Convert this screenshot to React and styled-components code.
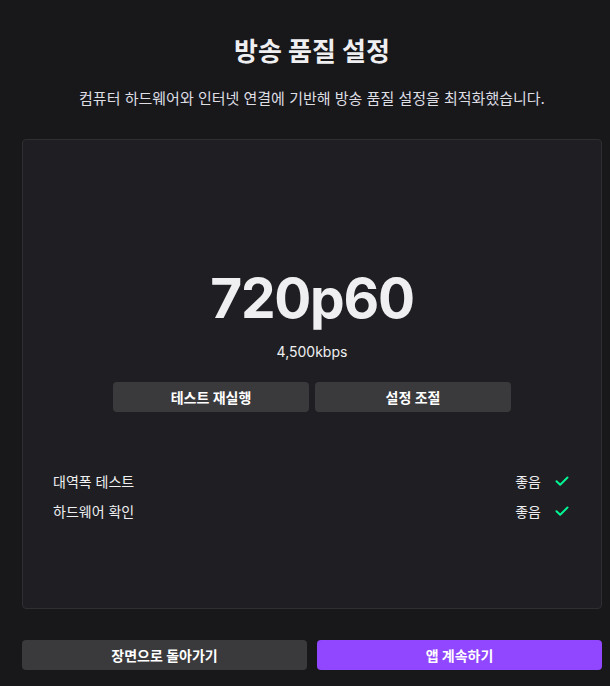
import styled, { createGlobalStyle } from 'styled-components'

const Global = createGlobalStyle`
  html, body {
    margin: 0;
    padding: 0;
    background: #18181b;
  }
  body {
    font-family: Inter, "Noto Sans CJK KR", sans-serif;
    color: #efeff1;
  }
`

const Page = styled.div`
  width: 610px;
  height: 686px;
  box-sizing: border-box;
  padding: 0 8px 0 22px;
  display: flex;
  flex-direction: column;
`

const Title = styled.h1`
  margin: 36px 0 0;
  font-size: 26px;
  line-height: 32px;
  font-weight: 700;
  text-align: center;
`

const Subtitle = styled.p`
  margin: 21px 0 0;
  font-size: 15px;
  line-height: 20px;
  text-align: center;
  color: #dedee3;
`

const Card = styled.section`
  margin-top: 30px;
  height: 470px;
  box-sizing: border-box;
  background: #1f1f23;
  border: 1px solid #2e2e33;
  border-radius: 4px;
  display: flex;
  flex-direction: column;
  align-items: center;
  padding-top: 125px;
`

const Resolution = styled.div`
  font-size: 55px;
  line-height: 66px;
  font-weight: 700;
  letter-spacing: -1.3px;
  color: #efeff1;
`

const Bitrate = styled.div`
  margin-top: 11px;
  font-size: 14px;
  line-height: 20px;
`

const ButtonRow = styled.div`
  margin-top: 20px;
  display: flex;
  gap: 6px;
`

const Button = styled.button`
  width: ${p => p.$w || 196}px;
  height: 30px;
  border: none;
  border-radius: 4px;
  background: ${p => (p.$primary ? '#9147ff' : '#3a3a3d')};
  color: #fff;
  font-family: inherit;
  font-size: 14px;
  font-weight: 700;
  cursor: pointer;
`

const Checks = styled.div`
  align-self: stretch;
  margin-top: 54px;
  padding: 0 31px 0 30px;
  display: flex;
  flex-direction: column;
`

const CheckRow = styled.div`
  height: 30px;
  display: flex;
  align-items: center;
  justify-content: space-between;
  font-size: 14px;
`

const Status = styled.span`
  display: flex;
  align-items: center;
  gap: 13px;
`

const Footer = styled.div`
  margin-top: 31px;
  display: grid;
  grid-template-columns: 285px 285px;
  gap: 10px;
`

const Check = () => (
  <svg width="16" height="16" viewBox="0 0 16 16" fill="none">
    <path d="M2.5 8.2 L6.2 11.8 L13.5 4.5" stroke="#00f593" strokeWidth="2" strokeLinecap="round" strokeLinejoin="round" />
  </svg>
)

const rows = ['대역폭 테스트', '하드웨어 확인']

export default function App() {
  return (
    <>
      <Global />
      <Page>
        <Title>방송 품질 설정</Title>
        <Subtitle>컴퓨터 하드웨어와 인터넷 연결에 기반해 방송 품질 설정을 최적화했습니다.</Subtitle>
        <Card>
          <Resolution>720p60</Resolution>
          <Bitrate>4,500kbps</Bitrate>
          <ButtonRow>
            <Button>테스트 재실행</Button>
            <Button>설정 조절</Button>
          </ButtonRow>
          <Checks>
            {rows.map(r => (
              <CheckRow key={r}>
                <span>{r}</span>
                <Status>
                  좋음
                  <Check />
                </Status>
              </CheckRow>
            ))}
          </Checks>
        </Card>
        <Footer>
          <Button $w={285}>장면으로 돌아가기</Button>
          <Button $w={285} $primary>앱 계속하기</Button>
        </Footer>
      </Page>
    </>
  )
}
